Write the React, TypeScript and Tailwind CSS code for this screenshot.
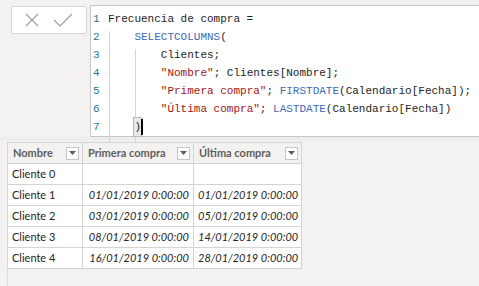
import React from "react";

const fn = "text-[#3b6cb5]";
const str = "text-[#a31515]";

type Seg = { t: string; c?: string };

const lines: Seg[][] = [
  [{ t: "Frecuencia de compra =" }],
  [{ t: "    " }, { t: "SELECTCOLUMNS", c: fn }, { t: "(" }],
  [{ t: "        Clientes;" }],
  [{ t: "        " }, { t: '"Nombre"', c: str }, { t: "; Clientes[Nombre];" }],
  [
    { t: "        " },
    { t: '"Primera compra"', c: str },
    { t: "; " },
    { t: "FIRSTDATE", c: fn },
    { t: "(Calendario[Fecha]);" },
  ],
  [
    { t: "        " },
    { t: '"Última compra"', c: str },
    { t: "; " },
    { t: "LASTDATE", c: fn },
    { t: "(Calendario[Fecha])" },
  ],
  [{ t: "    " }],
];

const rows = [
  ["Cliente 0", "", ""],
  ["Cliente 1", "01/01/2019 0:00:00", "01/01/2019 0:00:00"],
  ["Cliente 2", "03/01/2019 0:00:00", "05/01/2019 0:00:00"],
  ["Cliente 3", "08/01/2019 0:00:00", "14/01/2019 0:00:00"],
  ["Cliente 4", "16/01/2019 0:00:00", "28/01/2019 0:00:00"],
];

function Caret() {
  return (
    <span className="ml-auto flex h-[13px] w-[13px] items-center justify-center border border-[#c8c6c4] bg-white">
      <svg width="7" height="4" viewBox="0 0 7 4">
        <path d="M0 0h7L3.5 4z" fill="#605e5c" />
      </svg>
    </span>
  );
}

export default function App() {
  return (
    <div className="relative h-[286px] w-[479px] overflow-hidden bg-[#f3f2f1] font-['Lato',sans-serif]">
      <div className="flex h-[141px] border-b-4 border-[#eeedec]">
        <div className="w-[90px] pl-[11px] pt-[6px]">
          <div className="flex h-[28px] w-[76px] items-center justify-center gap-[14px] rounded-[2px] border border-[#d6d4d2] bg-white">
            <svg width="14" height="14" viewBox="0 0 14 14">
              <path d="M1 1l12 12M13 1L1 13" stroke="#a19f9d" strokeWidth="1.2" fill="none" />
            </svg>
            <svg width="20" height="14" viewBox="0 0 20 14">
              <path d="M1 7l6 6L19 1" stroke="#a19f9d" strokeWidth="1.2" fill="none" />
            </svg>
          </div>
        </div>
        <div className="mt-[5px] flex flex-1 border-l border-t border-b border-[#c8c6c4] bg-white pt-[4px] font-['Liberation_Mono',monospace] text-[11px] leading-[18px] text-[#1e1e1e]">
          <div className="w-[17px] pl-[2px] text-[#237893]">
            {lines.map((_, i) => (
              <div key={i} className="h-[18px]">
                {i + 1}
              </div>
            ))}
          </div>
          <div className="relative flex-1 whitespace-pre">
            <div className="absolute left-[1px] top-[21px] h-[114px] w-px bg-[#d4d4d4]" />
            <div className="absolute left-[27px] top-[39px] h-[96px] w-px bg-[#d4d4d4]" />
            {lines.map((segs, i) => (
              <div key={i} className="flex h-[18px]">
                {segs.map((s, j) => (
                  <span key={j} className={s.c}>
                    {s.t}
                  </span>
                ))}
                {i === 6 && (
                  <span className="relative bg-[#e8e8e8] outline outline-1 outline-[#b9b9b9]">
                    )
                    <span className="absolute right-[-2px] top-[1px] h-[16px] w-[2px] bg-black" />
                  </span>
                )}
              </div>
            ))}
          </div>
        </div>
      </div>
      <div className="absolute bottom-0 left-[7px] top-[141px] w-px bg-[#e1dfdd]" />
      <div className="relative ml-[7px] mt-[1px]">
        <table className="w-[294px] table-fixed border-collapse whitespace-nowrap text-[11px]">
          <colgroup>
            <col className="w-[75px]" />
            <col className="w-[111px]" />
            <col className="w-[108px]" />
          </colgroup>
          <thead>
            <tr className="h-[21px] bg-[#f3f2f1]">
              {["Nombre", "Primera compra", "Última compra"].map((h) => (
                <th key={h} className="border border-[#d6d4d2] py-0 pl-[5px] pr-[3px] font-bold text-[#605e5c]">
                  <div className="flex items-center">
                    <span>{h}</span>
                    <Caret />
                  </div>
                </th>
              ))}
            </tr>
          </thead>
          <tbody>
            {rows.map((r) => (
              <tr key={r[0]} className="h-[21px] bg-white text-[#252423]">
                <td className="border border-[#d6d4d2] px-[4px] py-0 text-left">{r[0]}</td>
                <td className="border border-[#d6d4d2] px-[4px] py-0 text-right italic">{r[1]}</td>
                <td className="border border-[#d6d4d2] px-[4px] py-0 text-right italic">{r[2]}</td>
              </tr>
            ))}
          </tbody>
        </table>
      </div>
    </div>
  );
}
